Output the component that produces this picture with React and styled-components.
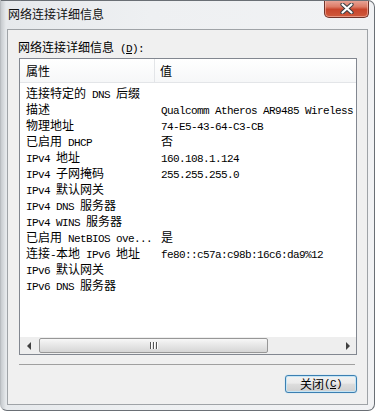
import React from "react";
import styled, { createGlobalStyle } from "styled-components";

const rows = [
  ["连接特定的 DNS 后缀", ""],
  ["描述", "Qualcomm Atheros AR9485 Wireless"],
  ["物理地址", "74-E5-43-64-C3-CB"],
  ["已启用 DHCP", "否"],
  ["IPv4 地址", "160.108.1.124"],
  ["IPv4 子网掩码", "255.255.255.0"],
  ["IPv4 默认网关", ""],
  ["IPv4 DNS 服务器", ""],
  ["IPv4 WINS 服务器", ""],
  ["已启用 NetBIOS ove...", "是"],
  ["连接-本地 IPv6 地址", "fe80::c57a:c98b:16c6:da9%12"],
  ["IPv6 默认网关", ""],
  ["IPv6 DNS 服务器", ""],
];

// ascii runs get the narrow mono face, like SimSun's half-width glyphs
const mixed = (s) =>
  s
    .split(/([\x20-\x7e]+)/)
    .filter(Boolean)
    .map((p, i) =>
      /^[\x20-\x7e]+$/.test(p) ? <Latin key={i}>{p}</Latin> : p
    );

const App = () => {
  return (
    <>
      <Global />
      <Window>
        <TitleBar>
          <Title>网络连接详细信息</Title>
          <CloseButton>
            <svg width="14" height="11" viewBox="0 0 14 11">
              <path d="M2.5 1.5 L11.5 9.5 M11.5 1.5 L2.5 9.5" stroke="#3b3f44" strokeWidth="4.2" strokeLinecap="round" />
              <path d="M2.5 1.5 L11.5 9.5 M11.5 1.5 L2.5 9.5" stroke="#ffffff" strokeWidth="2.2" strokeLinecap="round" />
            </svg>
          </CloseButton>
        </TitleBar>
        <Client>
          <Label>
            网络连接详细信息
            <Latin>
              {" ("}
              <u>D</u>
              {"):"}
            </Latin>
          </Label>
          <ListBox>
            <Header>
              <HeadCell $first>属性</HeadCell>
              <HeadCell>值</HeadCell>
            </Header>
            <Rows>
              {rows.map(([k, v]) => (
                <Row key={k}>
                  <Cell $first>{mixed(k)}</Cell>
                  <Cell>{mixed(v)}</Cell>
                </Row>
              ))}
            </Rows>
            <HScroll>
              <ArrowBtn>
                <Arrow $dir="left" />
              </ArrowBtn>
              <Thumb>
                <Grip />
                <Grip />
                <Grip />
              </Thumb>
              <Track />
              <ArrowBtn>
                <Arrow $dir="right" />
              </ArrowBtn>
            </HScroll>
          </ListBox>
          <Separator />
          <ButtonRow>
            <Button>
              关闭
              <Latin>
                (<u>C</u>)
              </Latin>
            </Button>
          </ButtonRow>
        </Client>
      </Window>
    </>
  );
};

const Global = createGlobalStyle`
  html, body {
    margin: 0;
    background: #ffffff;
  }
  body {
    font-family: "Noto Sans CJK SC", "Liberation Sans", sans-serif;
    font-size: 12px;
    color: #000;
  }
`;

const Latin = styled.span`
  font-family: "Liberation Mono", "Noto Sans CJK SC", monospace;
  font-size: 11px;
  letter-spacing: -0.6px;
  white-space: pre;
`;

const Window = styled.div`
  width: 375px;
  height: 411px;
  box-sizing: border-box;
  border: 1px solid #6a6f75;
  border-left-color: #b8bcc0;
  border-radius: 0 7px 7px 7px;
  background: linear-gradient(to right, #c7cbcf 0, #e6e9ec 5px, #eef0f2 40%, #f1f2f4 100%);
  display: flex;
  flex-direction: column;
  overflow: hidden;
`;

const TitleBar = styled.div`
  height: 28px;
  display: flex;
  justify-content: space-between;
  align-items: flex-start;
  padding-left: 7px;
`;

const Title = styled.div`
  margin-top: 6px;
  line-height: 14px;
  color: #111;
`;

const CloseButton = styled.div`
  width: 45px;
  height: 18px;
  margin-top: -1px;
  margin-right: 5px;
  box-sizing: border-box;
  border: 1px solid #70332a;
  border-top: none;
  border-radius: 0 0 5px 5px;
  background: linear-gradient(#e9a99d 0%, #dd7b66 40%, #c8452c 55%, #cf5a3c 100%);
  box-shadow: inset 0 0 0 1px rgba(255, 210, 200, 0.5);
  display: flex;
  align-items: center;
  justify-content: center;
`;

const Client = styled.div`
  flex: 1;
  margin: 0 6px 5px 6px;
  border: 1px solid #9fa3a7;
  background: #f0f0f0;
  padding: 10px 10px 0 11px;
  display: flex;
  flex-direction: column;
`;

const Label = styled.div`
  line-height: 14px;
  margin-left: -1px;
  margin-bottom: 2px;
`;

const ListBox = styled.div`
  height: 297px;
  box-sizing: border-box;
  border: 1px solid #828790;
  background: #fff;
  display: flex;
  flex-direction: column;
`;

const Header = styled.div`
  height: 24px;
  box-sizing: border-box;
  display: flex;
  background: linear-gradient(#ffffff, #f6f7f8);
  border-bottom: 1px solid #e3e5e8;
`;

const HeadCell = styled.div`
  width: ${(p) => (p.$first ? "135px" : "auto")};
  flex: ${(p) => (p.$first ? "none" : "1")};
  box-sizing: border-box;
  border-right: ${(p) => (p.$first ? "1px solid #e3e5e8" : "none")};
  padding-left: ${(p) => (p.$first ? "6px" : "5px")};
  line-height: 23px;
`;

const Rows = styled.div`
  flex: 1;
  padding-top: 2px;
  overflow: hidden;
`;

const Row = styled.div`
  display: grid;
  grid-template-columns: 135px 1fr;
  height: 16px;
  line-height: 16px;
`;

const Cell = styled.div`
  padding-left: 6px;
  white-space: nowrap;
  overflow: hidden;
`;

const HScroll = styled.div`
  height: 17px;
  display: flex;
  align-items: center;
  background: #eeeeee;
`;

const ArrowBtn = styled.div`
  width: 17px;
  height: 17px;
  display: flex;
  align-items: center;
  justify-content: center;
`;

const Arrow = styled.div`
  width: 0;
  height: 0;
  border-top: 4px solid transparent;
  border-bottom: 4px solid transparent;
  ${(p) =>
    p.$dir === "left"
      ? "border-right: 4px solid #404040;"
      : "border-left: 4px solid #404040;"}
`;

const Thumb = styled.div`
  width: 229px;
  height: 15px;
  margin-left: 2px;
  box-sizing: border-box;
  border: 1px solid #979797;
  border-radius: 2px;
  background: linear-gradient(#f7f7f7, #e6e6e6 50%, #d6d6d6);
  display: flex;
  align-items: center;
  justify-content: center;
  gap: 2px;
`;

const Grip = styled.div`
  width: 1px;
  height: 7px;
  background: #555;
  box-shadow: 1px 0 0 #fff;
`;

const Track = styled.div`
  flex: 1;
`;

const Separator = styled.div`
  height: 1px;
  margin: 9px 2px 0 0;
  background: #a0a0a0;
`;

const ButtonRow = styled.div`
  display: flex;
  justify-content: flex-end;
  margin-top: 10px;
`;

const Button = styled.div`
  width: 72px;
  height: 18px;
  box-sizing: border-box;
  border: 1px solid #3c7fb1;
  border-radius: 3px;
  background: linear-gradient(#f2f2f2 0%, #ebebeb 45%, #dddddd 50%, #cfcfcf 100%);
  box-shadow: inset 0 0 0 1px #c4e5f6, 0 0 1px #6ec0ee;
  display: flex;
  align-items: center;
  justify-content: center;
  line-height: 16px;
`;

export default App;
